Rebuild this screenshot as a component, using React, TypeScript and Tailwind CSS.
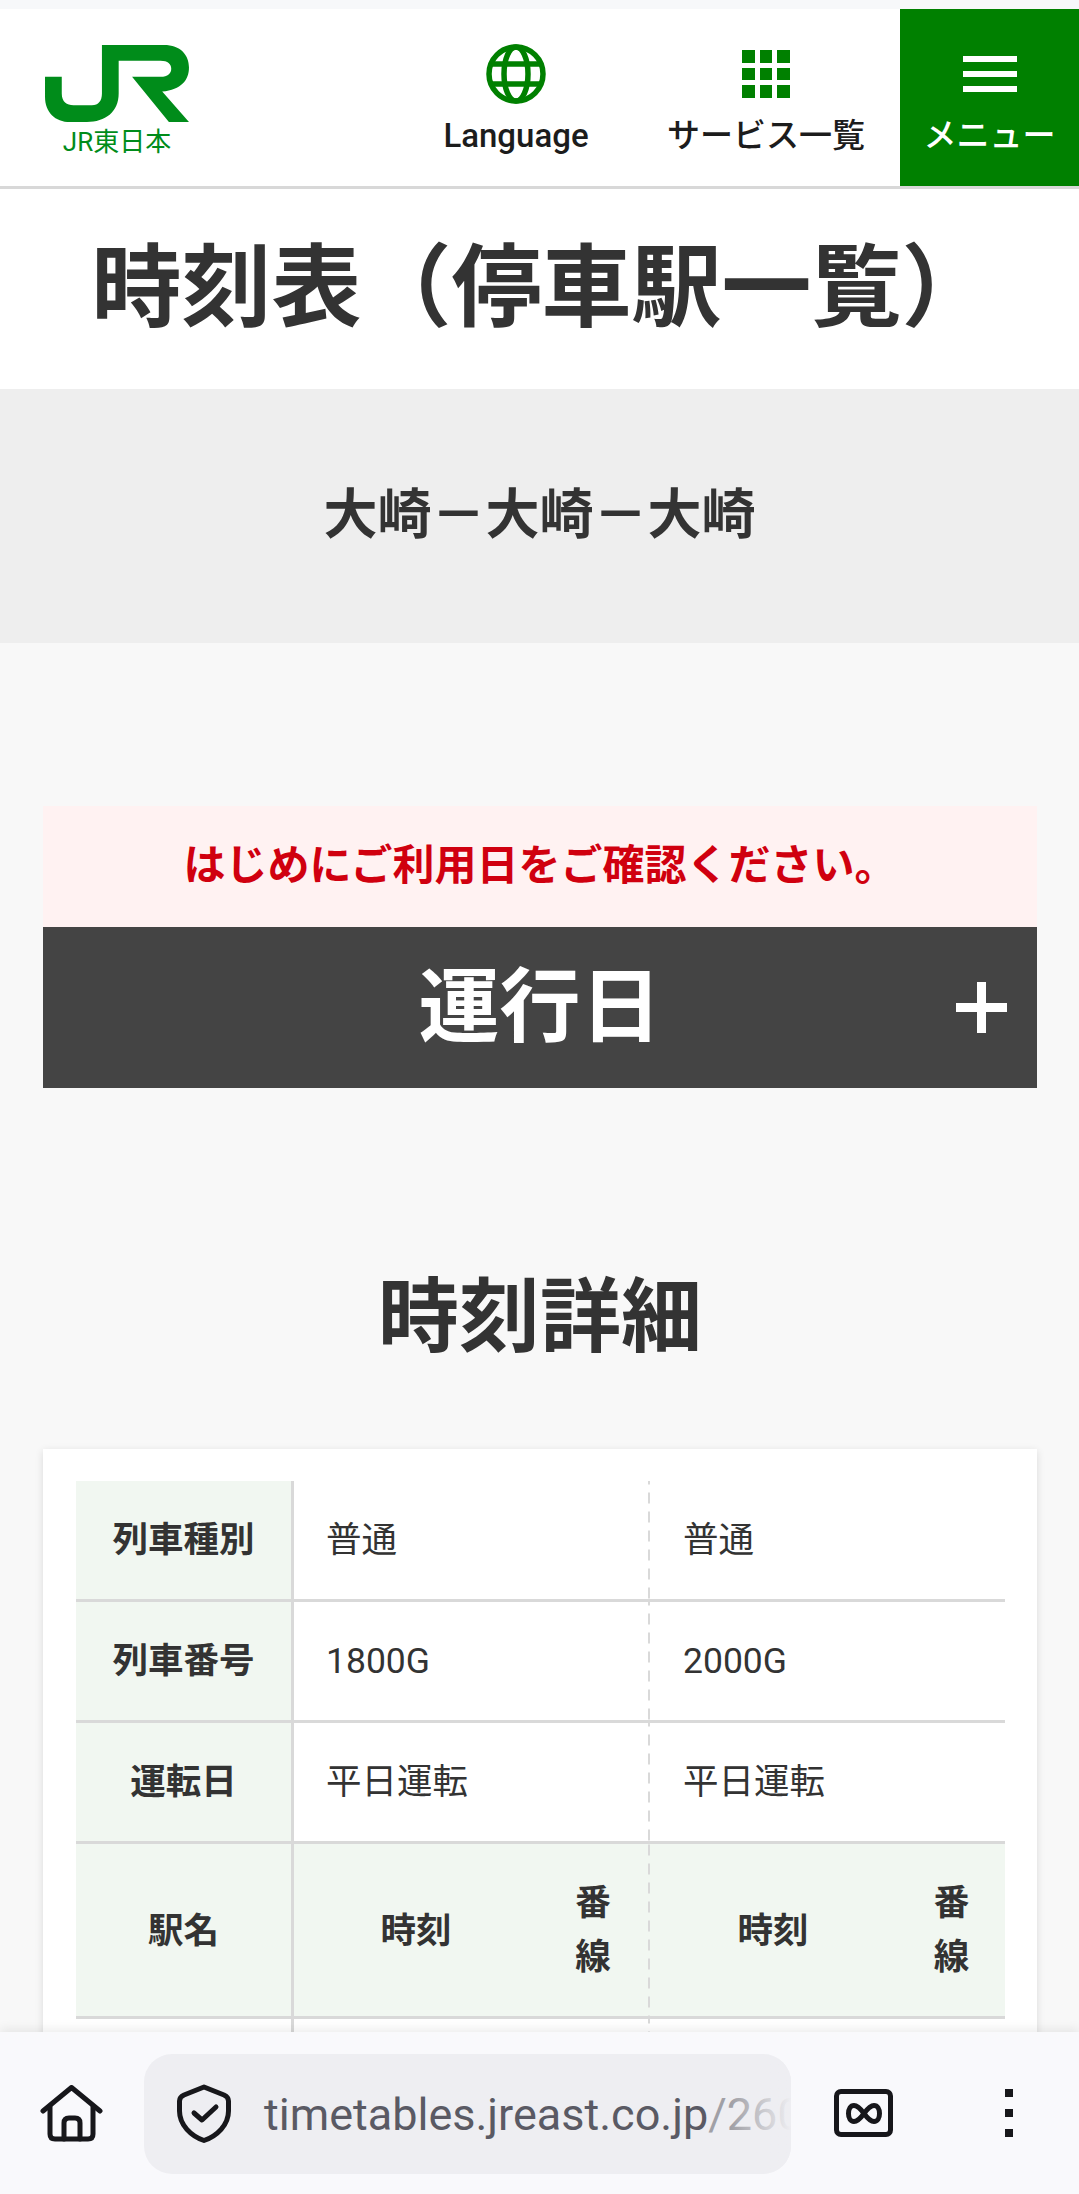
const dash = "bg-[linear-gradient(#d9d9d9_11px,transparent_11px)] bg-[length:2px_19px] bg-repeat-y bg-left";
const rows = [
  ["列車種別", "普通", "普通"],
  ["列車番号", "1800G", "2000G"],
  ["運転日", "平日運転", "平日運転"],
];

function Logo() {
  return (
    <div className="flex flex-col items-center w-[144px]">
      <svg viewBox="75 45 430 230" className="w-[144px] h-[77px]">
        <path fill="#008c1a" d="M245 45H430C480 45 505 75 505 112C505 150 482 178 425 184L505 275H445L335 140H420C442 140 452 130 452 116C452 102 442 92 420 92H295V190C295 245 255 275 200 275H150C105 275 75 245 75 200V140H125V190C125 215 140 225 160 225H215C235 225 245 212 245 190Z" />
      </svg>
      <span className="text-[#008c1a] text-[26px] leading-[25px] font-normal mt-[8px]">JR東日本</span>
    </div>
  );
}

function Globe() {
  return (
    <svg viewBox="0 0 60 60" className="w-[60px] h-[60px]" fill="none" stroke="#008000" strokeWidth="5.5">
      <circle cx="30" cy="30" r="27" />
      <ellipse cx="30" cy="30" rx="12" ry="27" />
      <path d="M4 20H56M4 40H56" />
    </svg>
  );
}

function Grid() {
  return (
    <div className="grid grid-cols-3 gap-[5px] w-[48px] h-[48px]">
      {Array.from({ length: 9 }).map((_, i) => (
        <div key={i} className="bg-[#008000]" />
      ))}
    </div>
  );
}

export default function App() {
  return (
    <div className="w-[1079px] h-[2194px] flex flex-col overflow-hidden bg-[#f8f8f8] text-[#333] font-['Roboto','Noto_Sans_CJK_JP',sans-serif]">
      <div className="flex-1 min-h-0 overflow-hidden">
        <div className="h-[9px] bg-[#f7f8fa]" />
        <header className="h-[180px] flex bg-white border-b-[3px] border-[#d8d8d8]">
          <div className="pl-[45px] pt-[36px]">
            <Logo />
          </div>
          <div className="flex-1 flex justify-end pr-[9px]">
            <div className="w-[250px] flex flex-col items-center pt-[35px] text-[#1c1c1c]">
              <Globe />
              <span className="text-[33px] leading-[40px] font-medium mt-[12px]">Language</span>
            </div>
            <div className="w-[250px] flex flex-col items-center pt-[41px] text-[#1c1c1c]">
              <Grid />
              <span className="text-[33px] leading-[40px] font-medium mt-[18px]">サービス一覧</span>
            </div>
          </div>
          <div className="w-[179px] h-[177px] bg-[#008000] flex flex-col items-center text-white pt-[47px]">
            <div className="flex flex-col gap-[9px] w-[54px]">
              <div className="h-[6px] bg-white" />
              <div className="h-[6px] bg-white" />
              <div className="h-[6px] bg-white" />
            </div>
            <span className="text-[33px] leading-[40px] font-medium mt-[24px]">メニュー</span>
          </div>
        </header>
        <div className="h-[200px] bg-white flex items-center justify-center">
          <h1 className="text-[90px] leading-none font-bold text-[#333] pl-[4px] whitespace-nowrap">時刻表（停車駅一覧）</h1>
        </div>
        <div className="h-[254px] bg-[#eeeeee] flex items-center justify-center">
          <p className="text-[54px] leading-none font-bold">大崎－大崎－大崎</p>
        </div>
        <main className="pl-[43px] pr-[42px] pt-[163px]">
          <div className="h-[121px] bg-[#fff2f2] flex items-center justify-center pb-[3px] text-[42px] font-bold text-[#d0000f]">
            はじめにご利用日をご確認ください。
          </div>
          <div className="relative h-[161px] bg-[#444444] flex items-center justify-center text-white text-[81px] font-bold leading-none">
            運行日
            <svg viewBox="0 0 51 51" className="absolute right-[30px] top-[55px] w-[51px] h-[51px]" fill="#fff">
              <path d="M21 0H30V21H51V30H30V51H21V30H0V21H21Z" />
            </svg>
          </div>
          <h2 className="h-[361px] flex items-start justify-center pt-[189px] text-[81px] font-bold leading-none text-[#333]">時刻詳細</h2>
          <div className="bg-white px-[33px] py-[32px] shadow-[0_2px_8px_rgba(0,0,0,0.12)]">
            <table className="w-[929px] table-fixed border-separate border-spacing-0 text-[35.5px] leading-none">
              <colgroup>
                <col className="w-[218px]" />
                <col className="w-[244px]" />
                <col className="w-[110px]" />
                <col className="w-[250px]" />
                <col className="w-[107px]" />
              </colgroup>
              <tbody>
                {rows.map((r) => (
                  <tr key={r[0]} className="h-[121px]">
                    <th className="bg-[#f1f7f1] border-b-[3px] border-r-[3px] border-[#d9d9d9] font-bold text-center pt-[2px]">{r[0]}</th>
                    <td colSpan={2} className="border-b-[3px] border-[#d9d9d9] pl-[32px] pt-[2px]">{r[1]}</td>
                    <td colSpan={2} className={`border-b-[3px] border-[#d9d9d9] pl-[35px] pt-[2px] ${dash}`}>{r[2]}</td>
                  </tr>
                ))}
                <tr className="h-[175px]">
                  <th className="bg-[#f1f7f1] border-b-[3px] border-r-[3px] border-[#d9d9d9] font-bold pt-[3px]">駅名</th>
                  <th className="bg-[#f1f7f1] border-b-[3px] border-[#d9d9d9] font-bold pt-[3px]">時刻</th>
                  <th className="bg-[#f1f7f1] border-b-[3px] border-[#d9d9d9] font-bold leading-[54px]">番<br />線</th>
                  <th className={`bg-[#f1f7f1] border-b-[3px] border-[#d9d9d9] font-bold pt-[3px] ${dash}`}>時刻</th>
                  <th className="bg-[#f1f7f1] border-b-[3px] border-[#d9d9d9] font-bold leading-[54px]">番<br />線</th>
                </tr>
                <tr className="h-[120px]">
                  <th className="border-r-[3px] border-[#d9d9d9]" />
                  <td colSpan={2} />
                  <td colSpan={2} className={dash} />
                </tr>
              </tbody>
            </table>
          </div>
        </main>
      </div>
      <footer className="relative h-[162px] shrink-0 bg-[#f9f9fc] shadow-[0_-3px_10px_rgba(0,0,0,0.08)] flex items-center">
        <svg viewBox="0 0 63 57" className="ml-[40px] w-[63px] h-[57px]" fill="none" stroke="#17171b" strokeWidth="5" strokeLinejoin="round" strokeLinecap="round">
          <path d="M3 26L31.5 2.5L60 26" />
          <path d="M10 22V49Q10 54 15 54H48Q53 54 53 49V22" />
          <path d="M24 54V38Q24 33 29 33H35Q40 33 40 38V54" />
        </svg>
        <div className="relative ml-[41px] mt-[2px] w-[647px] h-[120px] rounded-[28px] bg-[#eeeef2] flex items-center overflow-hidden">
          <svg viewBox="0 0 54 59" className="ml-[33px] -mt-[2px] w-[54px] h-[59px] shrink-0" fill="none" stroke="#17171b" strokeWidth="5" strokeLinejoin="round" strokeLinecap="round">
            <path d="M27 3L47 11Q51.5 13 51.5 17V27C51.5 41 40 52 27 56.5C14 52 2.5 41 2.5 27V17Q2.5 13 7 11Z" />
            <path d="M17 29L25 36L39 23" />
          </svg>
          <span className="ml-[33px] text-[45px] leading-none whitespace-nowrap text-[#5a5a64]">
            timetables.jreast.co.jp<span className="text-[#a0a0a6]">/260101/</span>
          </span>
          <div className="absolute right-0 top-0 bottom-0 w-[60px] bg-gradient-to-r from-transparent to-[#eeeef2]" />
        </div>
        <div className="ml-[43px] w-[59px] h-[48px] rounded-[7px] border-[5px] border-[#17171b] flex items-center justify-center">
          <svg viewBox="0 0 36 21" className="w-[36px] h-[21px]" fill="none" stroke="#17171b" strokeWidth="5">
            <path d="M18 10.5C14 5 11.500 2.500 8 2.500C4.500 2.500 2.500 6 2.500 10.500C2.500 15 4.500 18.500 8 18.500C11.500 18.500 14 16 18 10.500C22 5 24.500 2.500 28 2.500C31.500 2.500 33.500 6 33.500 10.500C33.500 15 31.500 18.500 28 18.500C24.500 18.500 22 16 18 10.500Z" />
          </svg>
        </div>
        <div className="ml-[112px] flex flex-col gap-[12px]">
          <div className="w-[8px] h-[8px] bg-[#17171b]" />
          <div className="w-[8px] h-[8px] bg-[#17171b]" />
          <div className="w-[8px] h-[8px] bg-[#17171b]" />
        </div>
      </footer>
    </div>
  );
}
